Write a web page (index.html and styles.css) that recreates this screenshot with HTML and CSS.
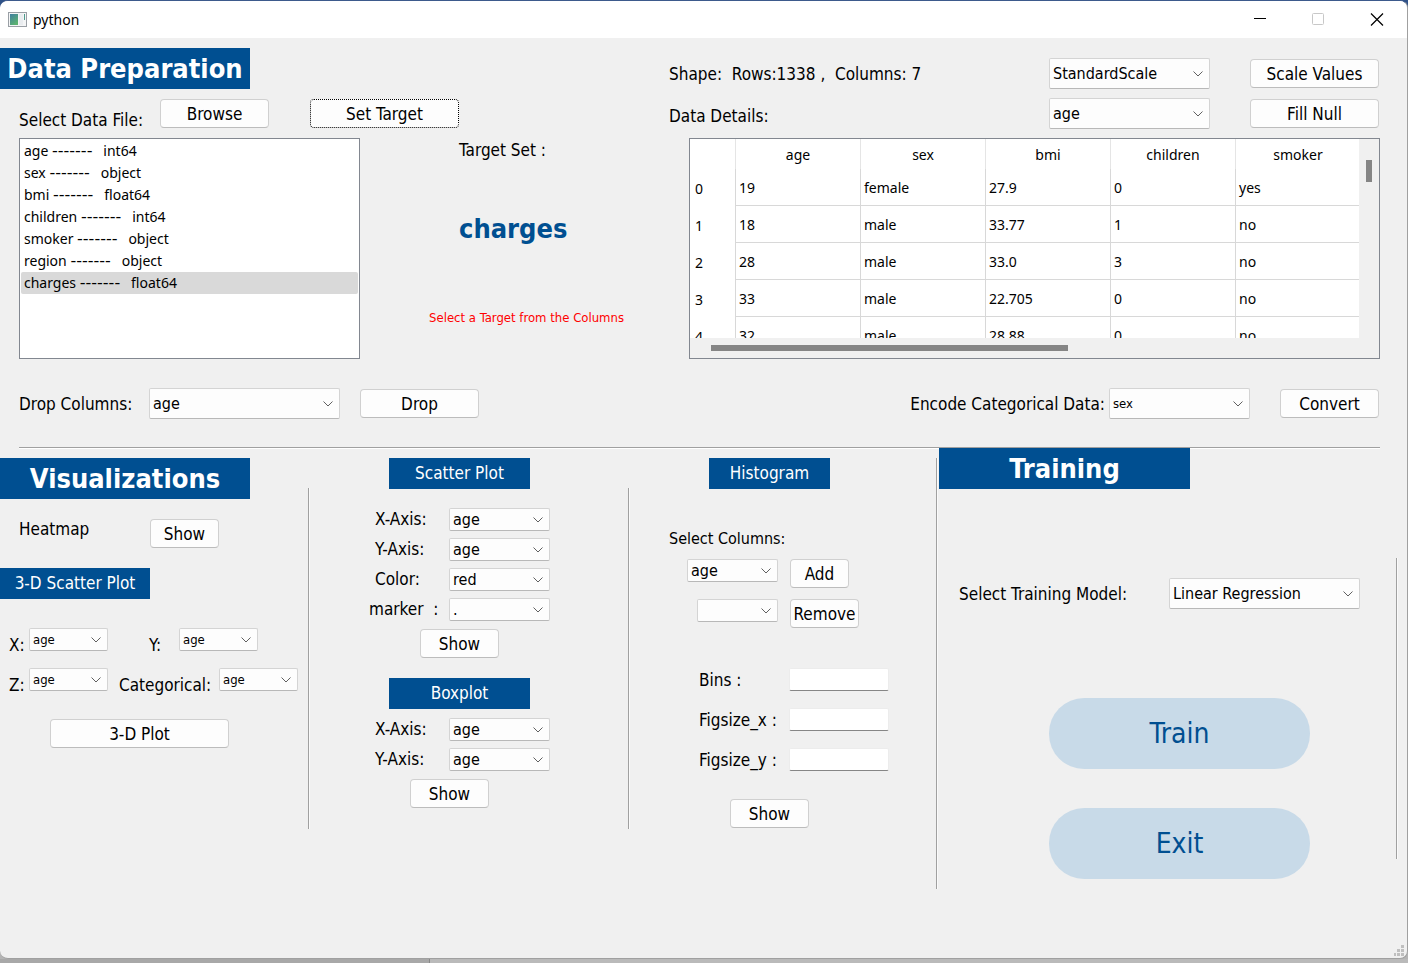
FILE: index.html
```html
<!DOCTYPE html>
<html lang="en">
<head>
<meta charset="utf-8">
<title>python</title>
<link rel="stylesheet" href="styles.css">
</head>
<body>
<div class="window">
  <header class="titlebar">
    <svg class="app-icon" width="19" height="16" viewBox="0 0 19 16" aria-hidden="true">
      <defs>
        <linearGradient id="pane" x1="0" y1="0" x2="0.6" y2="1">
          <stop offset="0" stop-color="#3f7fa0"/>
          <stop offset="1" stop-color="#5cb270"/>
        </linearGradient>
      </defs>
      <rect x="0.5" y="0.5" width="18" height="14" fill="#f4f5f6" stroke="#9a9fa5"/>
      <rect x="2" y="2" width="8" height="11" fill="url(#pane)"/>
      <rect x="11" y="2" width="4" height="11" fill="#e9ecef"/>
      <rect x="16" y="2" width="1" height="6" fill="#4d9a8c"/>
    </svg>
    <h1 class="title">python</h1>
    <div class="caption-buttons">
      <button class="caption" type="button" aria-label="Minimize"><svg width="14" height="14" viewBox="0 0 14 14"><path d="M0 5.5H12" stroke="#000" fill="none"/></svg></button>
      <button class="caption" type="button" aria-label="Maximize" disabled><svg width="14" height="14" viewBox="0 0 14 14"><rect x="0.500" y="0.500" width="11" height="11" rx="1" stroke="#c8c8c8" fill="none"/></svg></button>
      <button class="caption" type="button" aria-label="Close"><svg width="14" height="14" viewBox="0 0 14 14"><path d="M1 0.500L13 12.500M13 0.500L1 12.500" stroke="#000" stroke-width="1.2" fill="none"/></svg></button>
    </div>
  </header>

  <main>
    <section class="preparation">
      <div class="prep-left">
        <h2 class="banner">Data Preparation</h2>
        <div class="file-row">
          <span class="file-label">Select Data File:</span>
          <button class="btn w109" type="button">Browse</button>
          <button class="btn btn-target" type="button">Set Target</button>
        </div>
        <div class="target-row">
          <ul class="list" role="listbox" aria-label="Columns">
            <li role="option">age <span class="dashes">-------</span>   int64</li>
            <li role="option">sex <span class="dashes">-------</span>   object</li>
            <li role="option">bmi <span class="dashes">-------</span>   float64</li>
            <li role="option">children <span class="dashes">-------</span>   int64</li>
            <li role="option">smoker <span class="dashes">-------</span>   object</li>
            <li role="option">region <span class="dashes">-------</span>   object</li>
            <li role="option" class="selected" aria-selected="true">charges <span class="dashes">-------</span>   float64</li>
          </ul>
          <div class="target">
            <p class="target-label">Target Set :</p>
            <p class="target-name">charges</p>
            <p class="target-error">Select a Target from the Columns</p>
          </div>
        </div>
        <div class="drop-row">
          <label class="drop-label" for="drop">Drop Columns:</label>
          <select class="combo tall w191" id="drop"><option>age</option></select>
          <button class="btn w119" type="button">Drop</button>
        </div>
      </div>

      <div class="prep-right">
        <div class="tool-row">
          <p class="shape">Shape:&nbsp; Rows:1338 ,&nbsp; Columns: 7</p>
          <select class="combo tall w161" aria-label="Scaler"><option>StandardScale</option></select>
          <button class="btn w129" type="button">Scale Values</button>
        </div>
        <div class="tool-row">
          <p class="details">Data Details:</p>
          <select class="combo tall w161" aria-label="Column to fill"><option>age</option></select>
          <button class="btn w129" type="button">Fill Null</button>
        </div>
        <div class="table-frame">
          <div class="viewport">
            <table class="data">
              <thead><tr><th></th><th scope="col">age</th><th scope="col">sex</th><th scope="col">bmi</th><th scope="col">children</th><th scope="col">smoker</th></tr></thead>
              <tbody>
                <tr><th scope="row">0</th><td>19</td><td>female</td><td>27.9</td><td>0</td><td>yes</td></tr>
                <tr><th scope="row">1</th><td>18</td><td>male</td><td>33.77</td><td>1</td><td>no</td></tr>
                <tr><th scope="row">2</th><td>28</td><td>male</td><td>33.0</td><td>3</td><td>no</td></tr>
                <tr><th scope="row">3</th><td>33</td><td>male</td><td>22.705</td><td>0</td><td>no</td></tr>
                <tr><th scope="row">4</th><td>32</td><td>male</td><td>28.88</td><td>0</td><td>no</td></tr>
              </tbody>
            </table>
          </div>
          <div class="scroll-v"><div class="thumb-v"></div></div>
          <div class="scroll-h"><div class="thumb-h"></div></div>
        </div>
        <div class="encode-row">
          <label for="encode">Encode Categorical Data:</label>
          <select class="combo tall small-text w141" id="encode"><option>sex</option></select>
          <button class="btn w99" type="button">Convert</button>
        </div>
      </div>
    </section>

    <hr class="rule">

    <div class="lower">
      <section class="visual">
        <h2 class="banner">Visualizations</h2>
        <div class="heat-row">
          <span class="heat-label">Heatmap</span>
          <button class="btn w69" type="button">Show</button>
        </div>
        <h3 class="tag w150">3-D Scatter Plot</h3>
        <div class="axes">
          <label for="x3">X:</label>
          <select class="combo small-text w79" id="x3"><option>age</option></select>
          <label class="axis-y" for="y3">Y:</label>
          <select class="combo small-text w79" id="y3"><option>age</option></select>
        </div>
        <div class="axes">
          <label for="z3">Z:</label>
          <select class="combo small-text w79" id="z3"><option>age</option></select>
          <label class="axis-c" for="c3">Categorical:</label>
          <select class="combo small-text w79" id="c3"><option>age</option></select>
        </div>
        <button class="btn w179 plot-3d" type="button">3-D Plot</button>
      </section>
      <div class="divider inner"></div>

      <section class="plots">
        <h3 class="tag w141">Scatter Plot</h3>
        <div class="form">
          <label for="sx">X-Axis:</label><select class="combo" id="sx"><option>age</option></select>
          <label for="sy">Y-Axis:</label><select class="combo" id="sy"><option>age</option></select>
          <label for="sc">Color:</label><select class="combo" id="sc"><option>red</option></select>
          <label class="wide" for="sm">marker&nbsp; :</label><select class="combo" id="sm"><option>.</option></select>
        </div>
        <button class="btn w79 show-scatter" type="button">Show</button>
        <h3 class="tag w141 box-tag">Boxplot</h3>
        <div class="form form-box">
          <label for="bx">X-Axis:</label><select class="combo" id="bx"><option>age</option></select>
          <label for="by">Y-Axis:</label><select class="combo" id="by"><option>age</option></select>
        </div>
        <button class="btn w79 show-box" type="button">Show</button>
      </section>
      <div class="divider inner"></div>

      <section class="histogram">
        <h3 class="tag w121">Histogram</h3>
        <label class="hist-label" for="hc">Select Columns:</label>
        <div class="picker">
          <select class="combo w91" id="hc"><option>age</option></select>
          <button class="btn w59" type="button">Add</button>
          <select class="combo w81" aria-label="Selected columns"><option></option></select>
          <button class="btn w69" type="button">Remove</button>
        </div>
        <div class="sizes">
          <label for="bins">Bins :</label><input class="line" id="bins" type="text">
          <label for="fx">Figsize_x :</label><input class="line" id="fx" type="text">
          <label for="fy">Figsize_y :</label><input class="line" id="fy" type="text">
        </div>
        <button class="btn w79 show-hist" type="button">Show</button>
      </section>
      <div class="divider outer"></div>

      <section class="training">
        <h2 class="banner">Training</h2>
        <div class="model-row">
          <label for="model">Select Training Model:</label>
          <select class="combo tall w191" id="model"><option>Linear Regression</option></select>
        </div>
        <button class="pill" type="button">Train</button>
        <button class="pill" type="button">Exit</button>
      </section>
      <div class="divider edge"></div>
    </div>
  </main>
  <svg class="grip" width="11" height="12" viewBox="0 0 11 12" aria-hidden="true">
    <path d="M7 0h3v3h-3zM3 4h3v3h-3zM7 4h3v3h-3zM0 8h2v3h-2zM3 8h3v3h-3zM7 8h3v3h-3z" fill="#bfbfbf"/>
  </svg>
</div>
<div class="taskbar"><div class="taskbar-left"></div></div>
</body>
</html>
```
FILE: styles.css
```css
:root {
  --blue: #004f91;
  --face: #f0f0f0;
  --line: #a0a0a0;
  --form-font: "DejaVu Sans Condensed", "Noto Sans", sans-serif;
  --system-font: "Noto Sans", "Open Sans", sans-serif;
}

* { box-sizing: border-box; }

body {
  margin: 0;
  min-height: 100vh;
  display: flex;
  flex-direction: column;
  background: linear-gradient(#2f5288, #2f5288 80px, #b4b4b4 81px);
  color: #000;
  font: 17px/20px var(--form-font);
}

h1, h2, h3, p, ul { margin: 0; padding: 0; font-weight: 400; }

.window {
  position: relative;
  flex: 1;
  border: 1px solid #a0a0a0;
  border-top-color: #3d5a8c;
  border-left: 0;
  border-radius: 8px;
  background: var(--face);
  overflow: hidden;
}

.taskbar { height: 4px; background: #bababa; }
.taskbar-left { width: 430px; height: 4px; background: #a8a8a8; border-right: 1px solid #888; }

/* Title bar */
.titlebar {
  display: flex;
  align-items: center;
  height: 37px;
  padding-left: 8px;
  background: #fff;
}
.title { flex: 1; margin-left: 6px; font: 14px/20px var(--system-font); }
.caption-buttons { display: flex; padding-right: 1px; }
.caption {
  display: grid;
  place-items: center;
  width: 58px;
  height: 36px;
  padding: 0;
  border: 0;
  background: none;
}

/* Shared controls */
.banner {
  width: 250px;
  height: 41px;
  background: var(--blue);
  color: #fff;
  font-size: 27px;
  font-weight: 700;
  line-height: 42px;
  text-align: center;
}
.tag {
  height: 31px;
  background: var(--blue);
  color: #fff;
  font-size: 17px;
  line-height: 31px;
  text-align: center;
}
.btn {
  display: block;
  height: 29px;
  padding: 1px 0 0;
  border: 1px solid #d0d0d0;
  border-bottom-color: #bcbcbc;
  border-radius: 4px;
  background: #fdfdfd;
  color: #000;
  font: inherit;
  white-space: nowrap;
}
.btn-target { width: 149px; border: 1px dotted #000; }
.combo {
  display: block;
  height: 23px;
  padding: 0 22px 0 3px;
  border: 1px solid #d4d4d4;
  border-bottom-color: #b8b8b8;
  border-radius: 2px;
  background: #fdfdfd url("data:image/svg+xml,%3Csvg xmlns='http://www.w3.org/2000/svg' width='10' height='6'%3E%3Cpath d='M.5 .5L5 5L9.500 .5' fill='none' stroke='%23606060'/%3E%3C/svg%3E") no-repeat right 6px center;
  color: #000;
  font: 16px/20px var(--form-font);
  appearance: none;
}
.tall { height: 31px; }
.small-text { font-size: 13px; }

.w59 { width: 59px; }
.w69 { width: 69px; }
.w79 { width: 79px; }
.w81 { width: 81px; }
.w91 { width: 91px; }
.w99 { width: 99px; }
.w109 { width: 109px; }
.w119 { width: 119px; }
.w121 { width: 121px; }
.w129 { width: 129px; }
.w141 { width: 141px; }
.w150 { width: 150px; }
.w161 { width: 161px; }
.w179 { width: 179px; }
.w191 { width: 191px; }

/* Data preparation */
.preparation {
  display: grid;
  grid-template-columns: minmax(660px, 669fr) minmax(720px, 738fr);
}
.prep-left { padding-top: 10px; }
.file-row { display: flex; margin-top: 10px; padding-left: 19px; }
.file-label { width: 141px; padding-top: 11px; }
.btn-target { margin-left: 41px; }
.target-row { display: flex; margin-top: 8px; padding-left: 19px; }
.list {
  width: 341px;
  height: 221px;
  padding: 1px;
  border: 1px solid #828790;
  background: #fff;
  list-style: none;
  font: 14px/22px var(--system-font);
}
.list li { height: 22px; padding-left: 3px; white-space: pre; }
.list .selected { border-radius: 2px; background: #d9d9d9; }
.dashes { font: 16px/20px "DejaVu Sans", sans-serif; }
.target { flex: 1; padding-left: 69px; }
.target-label { padding: 2px 30px; }
.target-name {
  margin-top: 51px;
  padding-left: 30px;
  color: var(--blue);
  font-size: 27px;
  font-weight: 700;
  line-height: 32px;
}
.target-error { margin-top: 63px; color: #f00; font-size: 13px; }
.drop-row { display: flex; align-items: center; margin-top: 29px; padding-left: 19px; }
.drop-label { width: 130px; }
.drop-row .btn { margin-left: 20px; }

.prep-right { padding: 20px 27px 0 0; }
.tool-row { display: flex; align-items: center; margin-bottom: 9px; }
.tool-row p { flex: 1; }
.tool-row .btn { margin: 0 1px 0 40px; }
.details { padding-top: 5px; }
.table-frame {
  display: grid;
  grid-template: 199px 20px / minmax(0, 1fr) 20px;
  margin-left: 20px;
  border: 1px solid #828790;
}
.viewport { overflow: hidden; background: #fff; }
.data {
  width: 671px;
  border-collapse: separate;
  border-spacing: 0;
  table-layout: fixed;
  font: 14px/20px var(--system-font);
}
.data th, .data td { height: 37px; padding: 2px 3px 0; border-right: 1px solid #d8d8d8; }
.data th { font-weight: 400; }
.data td { border-bottom: 1px solid #d8d8d8; }
.data thead th { height: 30px; border-color: #e5e5e5; }
.data thead th:first-child { width: 46px; }
.data tbody th { padding-left: 5px; text-align: left; }
.thumb-v { width: 6px; height: 22px; margin: 21px 0 0 7px; background: #858585; }
.thumb-h { width: 357px; height: 6px; margin: 7px 0 0 21px; background: #858585; }
.encode-row { display: flex; align-items: center; justify-content: flex-end; margin-top: 29px; }
.encode-row .combo { margin-left: 4px; }
.encode-row .btn { margin: 0 1px 0 30px; }

.rule {
  height: 2px;
  margin: 28px 27px 0 19px;
  border: 0;
  border-top: 1px solid var(--line);
  border-bottom: 1px solid #fff;
}

/* Lower panels */
.lower {
  display: grid;
  grid-template-columns: minmax(300px, 308fr) 2px minmax(260px, 318fr) 2px minmax(240px, 306fr) 2px minmax(430px, 458fr) 2px 9px;
  align-items: start;
}
.divider { border-left: 1px solid var(--line); border-right: 1px solid #fafafa; }
.inner { height: 341px; margin-top: 39px; }
.outer { height: 431px; margin-top: 9px; }
.edge { height: 301px; margin-top: 109px; }

.visual, .plots, .histogram { padding-top: 9px; }
.heat-row { display: flex; margin-top: 20px; padding-left: 19px; }
.heat-label { width: 131px; }
.visual .tag { margin-top: 20px; }
.axes { display: flex; height: 40px; padding-left: 9px; }
.visual .tag + .axes { margin-top: 29px; }
.axes label { width: 20px; padding-top: 7px; }
.axes .axis-y { width: 30px; margin-left: 41px; }
.axes .axis-c { width: 100px; margin-left: 11px; }
.plot-3d { margin: 11px 0 0 50px; }

.plots { padding-left: 79px; }
.form {
  display: grid;
  grid-template-columns: 74px 101px;
  gap: 7px 0;
  align-items: center;
  margin: 19px 0 0 -14px;
}
.form label { line-height: 23px; }
.form .wide { margin-left: -6px; }
.form-box { margin-top: 9px; }
.show-scatter { margin: 8px 0 0 31px; }
.box-tag { margin-top: 20px; }
.show-box { margin: 8px 0 0 21px; }

.histogram { padding-left: 39px; }
.histogram .tag { margin-left: 40px; }
.hist-label { display: block; margin-top: 40px; font-size: 16px; }
.picker {
  display: grid;
  grid-template-columns: 109px 69px;
  gap: 11px 12px;
  margin-top: 10px;
}
.picker .combo { justify-self: end; }
.sizes {
  display: grid;
  grid-template-columns: 90px 100px;
  gap: 17px 0;
  align-items: center;
  margin: 40px 0 0 30px;
}
.line {
  width: 100%;
  height: 23px;
  border: 1px solid #ececec;
  border-bottom-color: #868686;
  border-radius: 2px;
  background: #fff;
  font: inherit;
}
.show-hist { margin: 28px 0 0 61px; }

.training { padding-left: 1px; }
.training .banner { margin-top: -1px; width: 251px; }
.model-row { display: flex; align-items: center; margin-top: 89px; padding-left: 20px; }
.model-row label { width: 210px; }
.pill {
  display: block;
  width: 261px;
  height: 71px;
  margin: 89px 0 0 110px;
  border: 0;
  border-radius: 35px;
  background: #c8dae8;
  color: var(--blue);
  font: 28px/36px var(--form-font);
}
.pill + .pill { margin-top: 39px; }

.grip { position: absolute; right: 2px; bottom: 1px; }
```
